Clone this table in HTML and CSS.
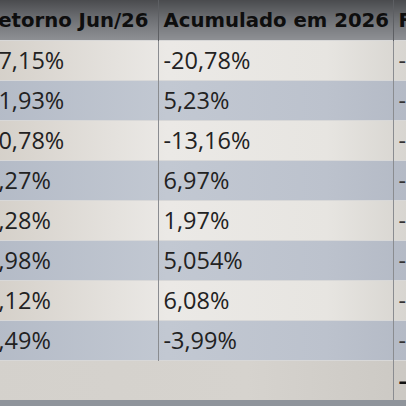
FILE: index.html
```html
<!DOCTYPE html>
<html lang="pt-BR">
<head>
    <meta charset="UTF-8">
    <meta name="viewport" content="width=device-width, initial-scale=1.0">
    <title>Retorno Jun/26</title>
    <link rel="stylesheet" href="styles.css">
</head>
<body>
    <div class="sheet">
        <table class="returns">
            <thead>
                <tr>
                    <th class="col-ret">Retorno Jun/26</th>
                    <th class="col-acc">Acumulado em 2026</th>
                    <th class="col-ext">F</th>
                </tr>
            </thead>
            <tbody>
                <tr class="light"><td class="first">17,15%</td><td>-20,78%</td><td class="dash">-</td></tr>
                <tr class="blue"><td class="first">11,93%</td><td>5,23%</td><td class="dash">-</td></tr>
                <tr class="light"><td class="first">10,78%</td><td>-13,16%</td><td class="dash">-</td></tr>
                <tr class="blue"><td class="first">3,27%</td><td>6,97%</td><td class="dash">-</td></tr>
                <tr class="light"><td class="first">2,28%</td><td>1,97%</td><td class="dash">-</td></tr>
                <tr class="blue"><td class="first">2,98%</td><td>5,054%</td><td class="dash">-</td></tr>
                <tr class="light"><td class="first">1,12%</td><td>6,08%</td><td class="dash">-</td></tr>
                <tr class="blue"><td class="first">1,49%</td><td>-3,99%</td><td class="dash">-</td></tr>
                <tr class="total"><td colspan="2"></td><td class="dash strong">–</td></tr>
            </tbody>
        </table>
        <div class="footer-strip"></div>
    </div>
</body>
</html>
```

FILE: styles.css
```css
body {
    margin: 0;
    background: #8f949b;
    overflow: hidden;
    font-family: 'Open Sans', 'Liberation Sans', sans-serif;
    color: #222;
}

.sheet {
    width: 406px;
    height: 406px;
    overflow: hidden;
}

.returns {
    margin-left: -18px;
    border-collapse: collapse;
    table-layout: fixed;
    width: 530px;
}

.col-ret {
    width: 176px;
}

.col-acc {
    width: 235px;
}

.col-ext {
    width: 119px;
}

.returns th {
    height: 40px;
    padding: 2px 0 0 5px;
    box-sizing: border-box;
    text-align: left;
    font-family: 'DejaVu Sans', 'Liberation Sans', sans-serif;
    font-weight: bold;
    font-size: 19.7px;
    color: #0e0e0e;
    background: linear-gradient(#4a4b4e, #6c6e72 45%, #8e9094);
    border-right: 1px solid #5d5f63;
    white-space: nowrap;
}

.returns th.col-ret {
    padding-left: 1px;
}

.returns td {
    height: 40px;
    padding: 0 0 0 5px;
    box-sizing: border-box;
    font-size: 23.5px;
    border-right: 1px solid #8a8c90;
    border-top: 1px solid #d8d8d8;
    white-space: nowrap;
}

.returns td.first {
    padding-left: 3px;
}

.light {
    background: linear-gradient(to right, #d3cec7, #ebe9e6 35%, #e7e5e1 65%, #c3c0ba);
}

.blue {
    background: linear-gradient(to right, #b3bac6, #c2c8d2 35%, #bcc2cd 65%, #a9afbb);
}

.total {
    background: linear-gradient(to right, #d4d1cc, #d6d3ce 50%, #c5c2bd);
}

.dash {
    color: #333;
}

.strong {
    font-weight: bold;
    color: #111;
}

.footer-strip {
    height: 8px;
    background: #8f949b;
}
```
